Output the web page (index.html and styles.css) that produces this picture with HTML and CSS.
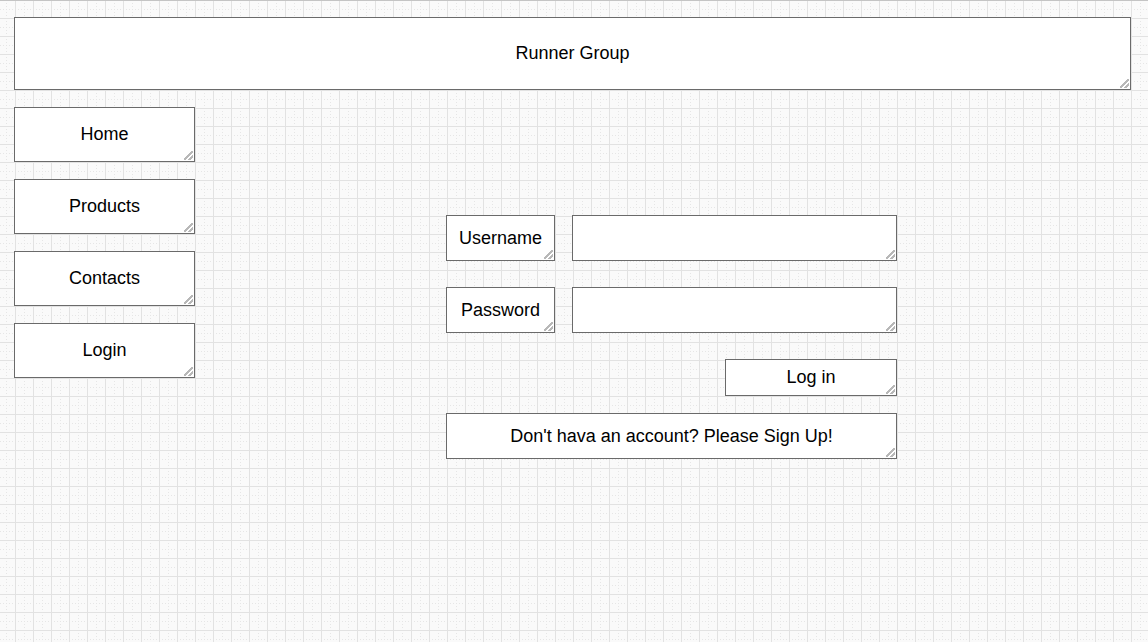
FILE: index.html
```html
<!DOCTYPE html>
<html lang="en">
<head>
<meta charset="utf-8">
<title>Runner Group</title>
<link rel="stylesheet" href="styles.css">
</head>
<body>
<div class="page">
  <header class="box header">Runner Group</header>
  <div class="main">
    <nav class="nav">
      <div class="box nav-item">Home</div>
      <div class="box nav-item">Products</div>
      <div class="box nav-item">Contacts</div>
      <div class="box nav-item">Login</div>
    </nav>
    <form class="login-form">
      <div class="row">
        <div class="box label">Username</div>
        <div class="box field"></div>
      </div>
      <div class="row">
        <div class="box label">Password</div>
        <div class="box field"></div>
      </div>
      <div class="actions">
        <div class="box submit">Log in</div>
      </div>
      <div class="box signup">Don't hava an account? Please Sign Up!</div>
    </form>
  </div>
</div>
</body>
</html>
```
FILE: styles.css
```css
html, body {
  margin: 0;
  padding: 0;
  min-height: 100%;
}

html {
  height: 100%;
}

body {
  font-family: "Liberation Sans", Arial, sans-serif;
  font-size: 18px;
  color: #000;
  background-color: #fafafa;
  background-image:
    linear-gradient(to bottom, #c4c4c4 1px, transparent 1px),
    linear-gradient(to right, #e2e2e2 1px, transparent 1px),
    linear-gradient(to bottom, #e2e2e2 1px, transparent 1px),
    linear-gradient(to bottom, transparent 1px, #fafafa 1px),
    linear-gradient(to right, #e6e6e6 1px, transparent 1px),
    linear-gradient(to right, transparent 1px, #fafafa 1px),
    linear-gradient(to bottom, #e6e6e6 1px, transparent 1px);
  background-size:
    100% 1px,
    18px 18px,
    18px 18px,
    18px 3px,
    18px 18px,
    3px 18px,
    18px 18px;
  background-position:
    0 0,
    15px 0,
    0 0,
    0 0,
    6px 0,
    0 0,
    0 9px;
  background-repeat: no-repeat, repeat, repeat, repeat, repeat, repeat, repeat;
}

.page {
  padding: 17px 0 0 14px;
}

.box {
  box-sizing: border-box;
  background: #fff;
  border: 1px solid #6a6a6a;
  display: flex;
  align-items: center;
  justify-content: center;
  text-align: center;
  resize: both;
  overflow: hidden;
}

.box::-webkit-resizer {
  background-color: transparent;
  background-image:
    linear-gradient(135deg,
      transparent 0 44%,
      #b8b8b8 44% 56%,
      transparent 56% 72%,
      #b8b8b8 72% 84%,
      transparent 84%);
  background-size: 9px 9px;
  background-position: right 1px bottom 1px;
  background-repeat: no-repeat;
}

.header {
  width: 1117px;
  height: 73px;
}

.main {
  display: flex;
  margin-top: 17px;
  align-items: flex-start;
}

.nav {
  display: flex;
  flex-direction: column;
  gap: 17px;
}

.nav-item {
  width: 181px;
  height: 55px;
}

.login-form {
  margin: 108px 0 0 251px;
  width: 451px;
  display: flex;
  flex-direction: column;
}

.row {
  display: flex;
  gap: 17px;
  margin-bottom: 26px;
}

.label {
  width: 109px;
  height: 46px;
}

.field {
  width: 325px;
  height: 46px;
}

.actions {
  display: flex;
  justify-content: flex-end;
  margin-bottom: 17px;
}

.submit {
  width: 172px;
  height: 37px;
}

.signup {
  width: 451px;
  height: 46px;
}
```
